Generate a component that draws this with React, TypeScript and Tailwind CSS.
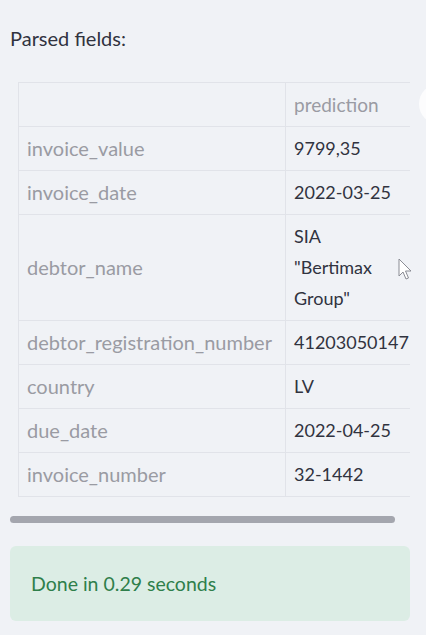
const rows: [string, string[]][] = [
  ['invoice_value', ['9799,35']],
  ['invoice_date', ['2022-03-25']],
  ['debtor_name', ['SIA', '"Bertimax', 'Group"']],
  ['debtor_registration_number', ['41203050147']],
  ['country', ['LV']],
  ['due_date', ['2022-04-25']],
  ['invoice_number', ['32-1442']],
]

function Cursor() {
  return (
    <svg className="absolute left-[398px] top-[258px] w-[16px] h-[24px]" viewBox="0 0 16 24">
      <path
        d="M1 1 L1 18 L5 14 L8 21 L10.5 20 L7.5 13 L13 13 Z"
        fill="#ffffff"
        stroke="#8a8c94"
        strokeWidth={1}
        strokeLinejoin="round"
      />
    </svg>
  )
}

export default function App() {
  return (
    <div
      className="relative w-[426px] h-[635px] overflow-hidden bg-[#f0f2f6] text-[#31333f]"
      style={{ fontFamily: 'Lato, "Open Sans", sans-serif' }}
    >
      <p className="pt-[26px] pl-[10px] text-[20px] leading-[24px]">Parsed fields:</p>

      <div className="ml-[10px] mt-[32px] w-[400px] overflow-hidden">
        <table className="ml-[8px] w-[420px] table-fixed border-collapse text-[20px] leading-[31px] whitespace-nowrap">
          <thead>
            <tr>
              <th className="w-[267px] border border-[#e1e3e9] pl-[8px] pr-[9px] py-[6px]"></th>
              <th className="border border-[#e1e3e9] pl-[8px] pr-[9px] py-[6px] text-left font-normal text-[19px] text-[#9a9ba3]">
                prediction
              </th>
            </tr>
          </thead>
          <tbody>
            {rows.map(([k, v]) => (
              <tr key={k}>
                <td className="border border-[#e1e3e9] pl-[8px] pr-[9px] py-[6px] text-[#9a9ba3]">{k}</td>
                <td className="border border-[#e1e3e9] pl-[8px] pr-[9px] py-[6px] text-[18px]">
                  {v.map((line) => (
                    <div key={line}>{line}</div>
                  ))}
                </td>
              </tr>
            ))}
          </tbody>
        </table>
      </div>

      <div className="ml-[10px] mt-[19px] h-[7px] w-[385px] rounded-full bg-[#a4a6ae]"></div>

      <div className="ml-[10px] mt-[23px] h-[75px] w-[400px] rounded-[6px] bg-[#dcede5] pl-[21px] flex items-center text-[19.5px] text-[#2f7f4b]">
        Done in 0.29 seconds
      </div>

      <div className="absolute left-[419px] top-[84px] h-[40px] w-[40px] rounded-full bg-white/80"></div>
      <Cursor />
    </div>
  )
}
